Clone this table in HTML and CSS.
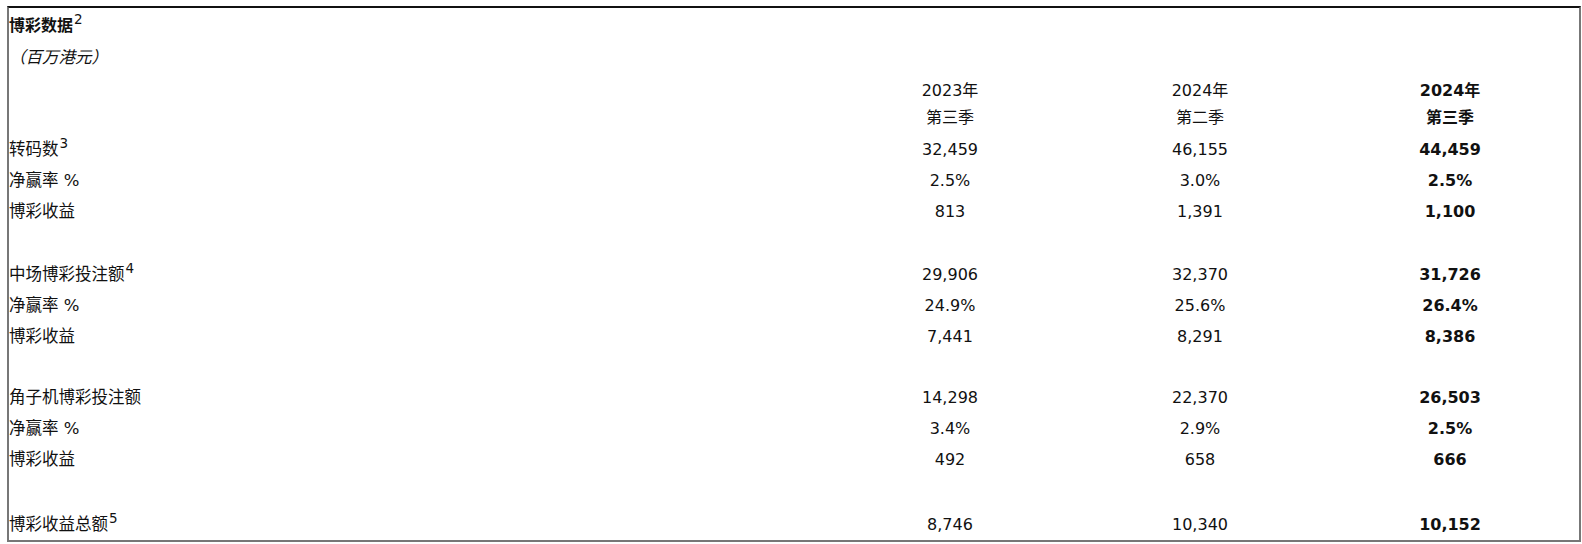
FILE: index.html
```html
<!DOCTYPE html>
<html lang="zh-CN">
<head>
<meta charset="utf-8">
<title>博彩数据</title>
<link rel="stylesheet" href="styles.css">
</head>
<body>
<div class="frame">
  <table class="data">
    <colgroup>
      <col class="c-label">
      <col class="c-num">
      <col class="c-num">
      <col class="c-num3">
    </colgroup>
    <tbody>
      <tr class="r-title"><td class="title" colspan="4">博彩数据<sup>2</sup></td></tr>
      <tr class="r-sub"><td class="sub" colspan="4">（百万港元）</td></tr>
      <tr class="r-head">
        <td></td>
        <td class="num head">2023年<br>第三季</td>
        <td class="num head">2024年<br>第二季</td>
        <td class="num head bold">2024年<br>第三季</td>
      </tr>
      <tr class="r"><td class="label">转码数<sup>3</sup></td><td class="num">32,459</td><td class="num">46,155</td><td class="num bold">44,459</td></tr>
      <tr class="r"><td class="label">净赢率 %</td><td class="num">2.5%</td><td class="num">3.0%</td><td class="num bold">2.5%</td></tr>
      <tr class="r"><td class="label">博彩收益</td><td class="num">813</td><td class="num">1,391</td><td class="num bold">1,100</td></tr>
      <tr class="gap g1"><td colspan="4"></td></tr>
      <tr class="r"><td class="label">中场博彩投注额<sup>4</sup></td><td class="num">29,906</td><td class="num">32,370</td><td class="num bold">31,726</td></tr>
      <tr class="r"><td class="label">净赢率 %</td><td class="num">24.9%</td><td class="num">25.6%</td><td class="num bold">26.4%</td></tr>
      <tr class="r"><td class="label">博彩收益</td><td class="num">7,441</td><td class="num">8,291</td><td class="num bold">8,386</td></tr>
      <tr class="gap g2"><td colspan="4"></td></tr>
      <tr class="r"><td class="label">角子机博彩投注额</td><td class="num">14,298</td><td class="num">22,370</td><td class="num bold">26,503</td></tr>
      <tr class="r"><td class="label">净赢率 %</td><td class="num">3.4%</td><td class="num">2.9%</td><td class="num bold">2.5%</td></tr>
      <tr class="r"><td class="label">博彩收益</td><td class="num">492</td><td class="num">658</td><td class="num bold">666</td></tr>
      <tr class="gap g3"><td colspan="4"></td></tr>
      <tr class="r"><td class="label">博彩收益总额<sup>5</sup></td><td class="num">8,746</td><td class="num">10,340</td><td class="num bold">10,152</td></tr>
    </tbody>
  </table>
</div>
</body>
</html>
```

FILE: styles.css
```css
html, body {
  margin: 0;
  padding: 0;
  background: #ffffff;
}

body {
  font-family: "DejaVu Sans", "Noto Sans CJK SC", sans-serif;
  font-size: 16px;
  color: #111111;
}

.frame {
  margin: 6px 1px 0 7px;
  width: 1570px;
  height: 532px;
  border-top: 2px solid #111111;
  border-left: 2px solid #777777;
  border-right: 2px solid #777777;
  border-bottom: 2px solid #777777;
  overflow: hidden;
}

.data {
  border-collapse: collapse;
  border-spacing: 0;
  table-layout: fixed;
  width: 1566px;
}

.c-label { width: 816px; }
.c-num { width: 250px; }
.c-num3 { width: 250px; }

.data td {
  padding: 0;
  vertical-align: middle;
  white-space: nowrap;
  line-height: 20px;
}

.r-title { height: 32px; }
.r-sub { height: 32px; }
.r-head { height: 62px; }
.r { height: 31px; }
.g1 { height: 32px; }
.g2 { height: 30px; }
.g3 { height: 34px; }

.title {
  font-weight: bold;
  font-family: "Noto Sans CJK SC", sans-serif;
}

.sub {
  font-style: italic;
  font-size: 16.5px;
  font-family: "Noto Sans CJK SC", sans-serif;
}

.label {
  font-size: 16.5px;
}

.num {
  text-align: center;
}

.head {
  line-height: 27px !important;
  padding-top: 2px !important;
}

.bold {
  font-weight: bold;
}

sup {
  font-family: "DejaVu Sans", sans-serif;
  font-size: 13.5px;
  font-weight: normal;
  line-height: 0;
  vertical-align: 7px;
  margin-left: 1px;
}
```
